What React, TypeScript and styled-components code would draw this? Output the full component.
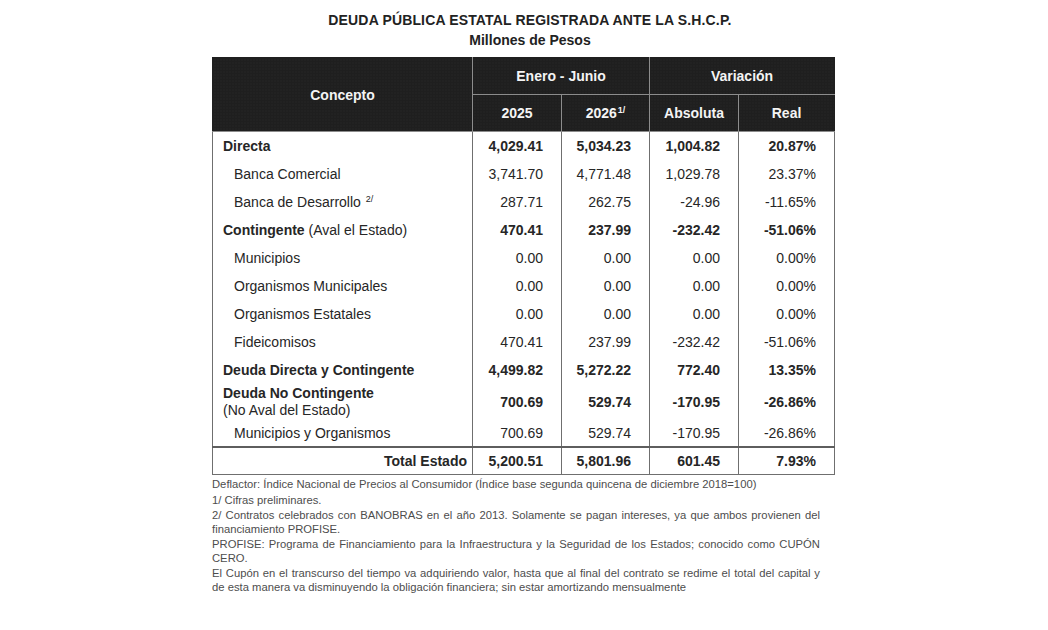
import React from 'react';
import styled, { createGlobalStyle } from 'styled-components';

const GlobalStyle = createGlobalStyle`
  html, body {
    margin: 0;
    padding: 0;
    background: #ffffff;
  }

  body {
    font-family: 'Liberation Sans', Arial, sans-serif;
    color: #262626;
  }
`;

export const Page = styled.div`
  width: 1048px;
  height: 630px;
  padding: 12px 0 0 212px;
  box-sizing: border-box;
`;

export const Heading = styled.div`
  width: 636px;
  text-align: center;
  font-weight: 700;
  font-size: 14px;
  line-height: 17px;
  color: #222;
`;

export const Title = styled.div`
  letter-spacing: 0.15px;
`;

export const Subtitle = styled.div`
  margin-top: 3px;
`;

export const Table = styled.table`
  margin-top: 8px;
  width: 622px;
  border-collapse: collapse;
  table-layout: fixed;
  border: 1px solid #6f6f6f;
  font-size: 14px;
`;

export const HeadCell = styled.th<{ $tall?: boolean }>`
  background-color: #1f1f1f;
  background-image: radial-gradient(rgba(255, 255, 255, 0.06) 1px, transparent 1px);
  background-size: 3px 3px;
  color: #f4f4f4;
  font-weight: 700;
  font-size: 14px;
  height: ${({ $tall }) => ($tall ? '73px' : '36px')};
  padding: 0;
  text-align: center;
  vertical-align: middle;
  border: 1px solid #8c8c8c;
  border-top-color: #1f1f1f;

  &:first-child {
    border-left-color: #1f1f1f;
  }

  &:last-child {
    border-right-color: #1f1f1f;
  }
`;

export const Sup = styled.sup`
  font-size: 9px;
  line-height: 0;
  vertical-align: 5px;
  margin-left: 1px;
`;

export const Row = styled.tr<{ $total?: boolean }>`
  ${({ $total }) => ($total ? 'border-top: 2px solid #5e5e5e;' : '')}
`;

export const LabelCell = styled.td<{ $bold?: boolean; $indent?: boolean; $right?: boolean; $h: number }>`
  height: ${({ $h }) => $h}px;
  padding: 0 ${({ $right }) => ($right ? '5px' : '0')} 0 ${({ $indent }) => ($indent ? '21px' : '10px')};
  text-align: ${({ $right }) => ($right ? 'right' : 'left')};
  font-weight: ${({ $bold }) => ($bold ? 700 : 400)};
  line-height: 17px;
  vertical-align: middle;
  border-right: 1px solid #6f6f6f;
  color: #262626;
  white-space: nowrap;
`;

export const Light = styled.span`
  font-weight: 400;
`;

export const NumCell = styled.td<{ $bold?: boolean }>`
  padding: 0 18px 0 0;
  text-align: right;
  font-weight: ${({ $bold }) => ($bold ? 700 : 400)};
  vertical-align: middle;
  border-right: 1px solid #6f6f6f;
  color: #262626;
`;

export const Notes = styled.div`
  width: 608px;
  margin-top: 3px;
  font-size: 11.25px;
  line-height: 13.5px;
  color: #4d4d4d;
  text-align: justify;
`;

export const Note = styled.p`
  margin: 0 0 2px 0;
`;

type DataRow = {
  label: React.ReactNode;
  values: string[];
  bold?: boolean;
  indent?: boolean;
  total?: boolean;
  height?: number;
};

const rows: DataRow[] = [
  { label: 'Directa', values: ['4,029.41', '5,034.23', '1,004.82', '20.87%'], bold: true },
  { label: 'Banca Comercial', values: ['3,741.70', '4,771.48', '1,029.78', '23.37%'], indent: true },
  {
    label: (
      <>
        Banca de Desarrollo <Sup>2/</Sup>
      </>
    ),
    values: ['287.71', '262.75', '-24.96', '-11.65%'],
    indent: true,
  },
  {
    label: (
      <>
        Contingente <Light>(Aval el Estado)</Light>
      </>
    ),
    values: ['470.41', '237.99', '-232.42', '-51.06%'],
    bold: true,
  },
  { label: 'Municipios', values: ['0.00', '0.00', '0.00', '0.00%'], indent: true },
  { label: 'Organismos Municipales', values: ['0.00', '0.00', '0.00', '0.00%'], indent: true },
  { label: 'Organismos Estatales', values: ['0.00', '0.00', '0.00', '0.00%'], indent: true },
  { label: 'Fideicomisos', values: ['470.41', '237.99', '-232.42', '-51.06%'], indent: true },
  { label: 'Deuda Directa y Contingente', values: ['4,499.82', '5,272.22', '772.40', '13.35%'], bold: true },
  {
    label: (
      <>
        Deuda No Contingente
        <br />
        <Light>(No Aval del Estado)</Light>
      </>
    ),
    values: ['700.69', '529.74', '-170.95', '-26.86%'],
    bold: true,
    height: 36,
  },
  {
    label: 'Municipios y Organismos',
    values: ['700.69', '529.74', '-170.95', '-26.86%'],
    indent: true,
    height: 26,
  },
];

const totalRow: DataRow = {
  label: 'Total Estado',
  values: ['5,200.51', '5,801.96', '601.45', '7.93%'],
  bold: true,
  total: true,
  height: 26,
};

const DebtRow: React.FC<{ row: DataRow }> = ({ row }) => (
  <Row $total={row.total}>
    <LabelCell $bold={row.bold} $indent={row.indent} $right={row.total} $h={row.height ?? 28}>
      {row.label}
    </LabelCell>
    {row.values.map((v, i) => (
      <NumCell key={i} $bold={row.bold}>
        {v}
      </NumCell>
    ))}
  </Row>
);

export default function App() {
  return (
    <>
      <GlobalStyle />
      <Page>
        <Heading>
          <Title>DEUDA PÚBLICA ESTATAL REGISTRADA ANTE LA S.H.C.P.</Title>
          <Subtitle>Millones de Pesos</Subtitle>
        </Heading>

        <Table>
          <colgroup>
            <col style={{ width: 260 }} />
            <col style={{ width: 89 }} />
            <col style={{ width: 88 }} />
            <col style={{ width: 89 }} />
            <col style={{ width: 96 }} />
          </colgroup>
          <thead>
            <tr>
              <HeadCell rowSpan={2} $tall>
                Concepto
              </HeadCell>
              <HeadCell colSpan={2}>Enero - Junio</HeadCell>
              <HeadCell colSpan={2}>Variación</HeadCell>
            </tr>
            <tr>
              <HeadCell>2025</HeadCell>
              <HeadCell>
                2026<Sup>1/</Sup>
              </HeadCell>
              <HeadCell>Absoluta</HeadCell>
              <HeadCell>Real</HeadCell>
            </tr>
          </thead>
          <tbody>
            {rows.map((r, i) => (
              <DebtRow key={i} row={r} />
            ))}
            <DebtRow row={totalRow} />
          </tbody>
        </Table>

        <Notes>
          <Note>
            Deflactor: Índice Nacional de Precios al Consumidor (Índice base segunda quincena de diciembre 2018=100)
          </Note>
          <Note>1/ Cifras preliminares.</Note>
          <Note>
            2/ Contratos celebrados con BANOBRAS en el año 2013. Solamente se pagan intereses, ya que ambos provienen del
            financiamiento PROFISE.
          </Note>
          <Note>
            PROFISE: Programa de Financiamiento para la Infraestructura y la Seguridad de los Estados; conocido como CUPÓN
            CERO.
          </Note>
          <Note>
            El Cupón en el transcurso del tiempo va adquiriendo valor, hasta que al final del contrato se redime el total
            del capital y de esta manera va disminuyendo la obligación financiera; sin estar amortizando mensualmente
          </Note>
        </Notes>
      </Page>
    </>
  );
}
